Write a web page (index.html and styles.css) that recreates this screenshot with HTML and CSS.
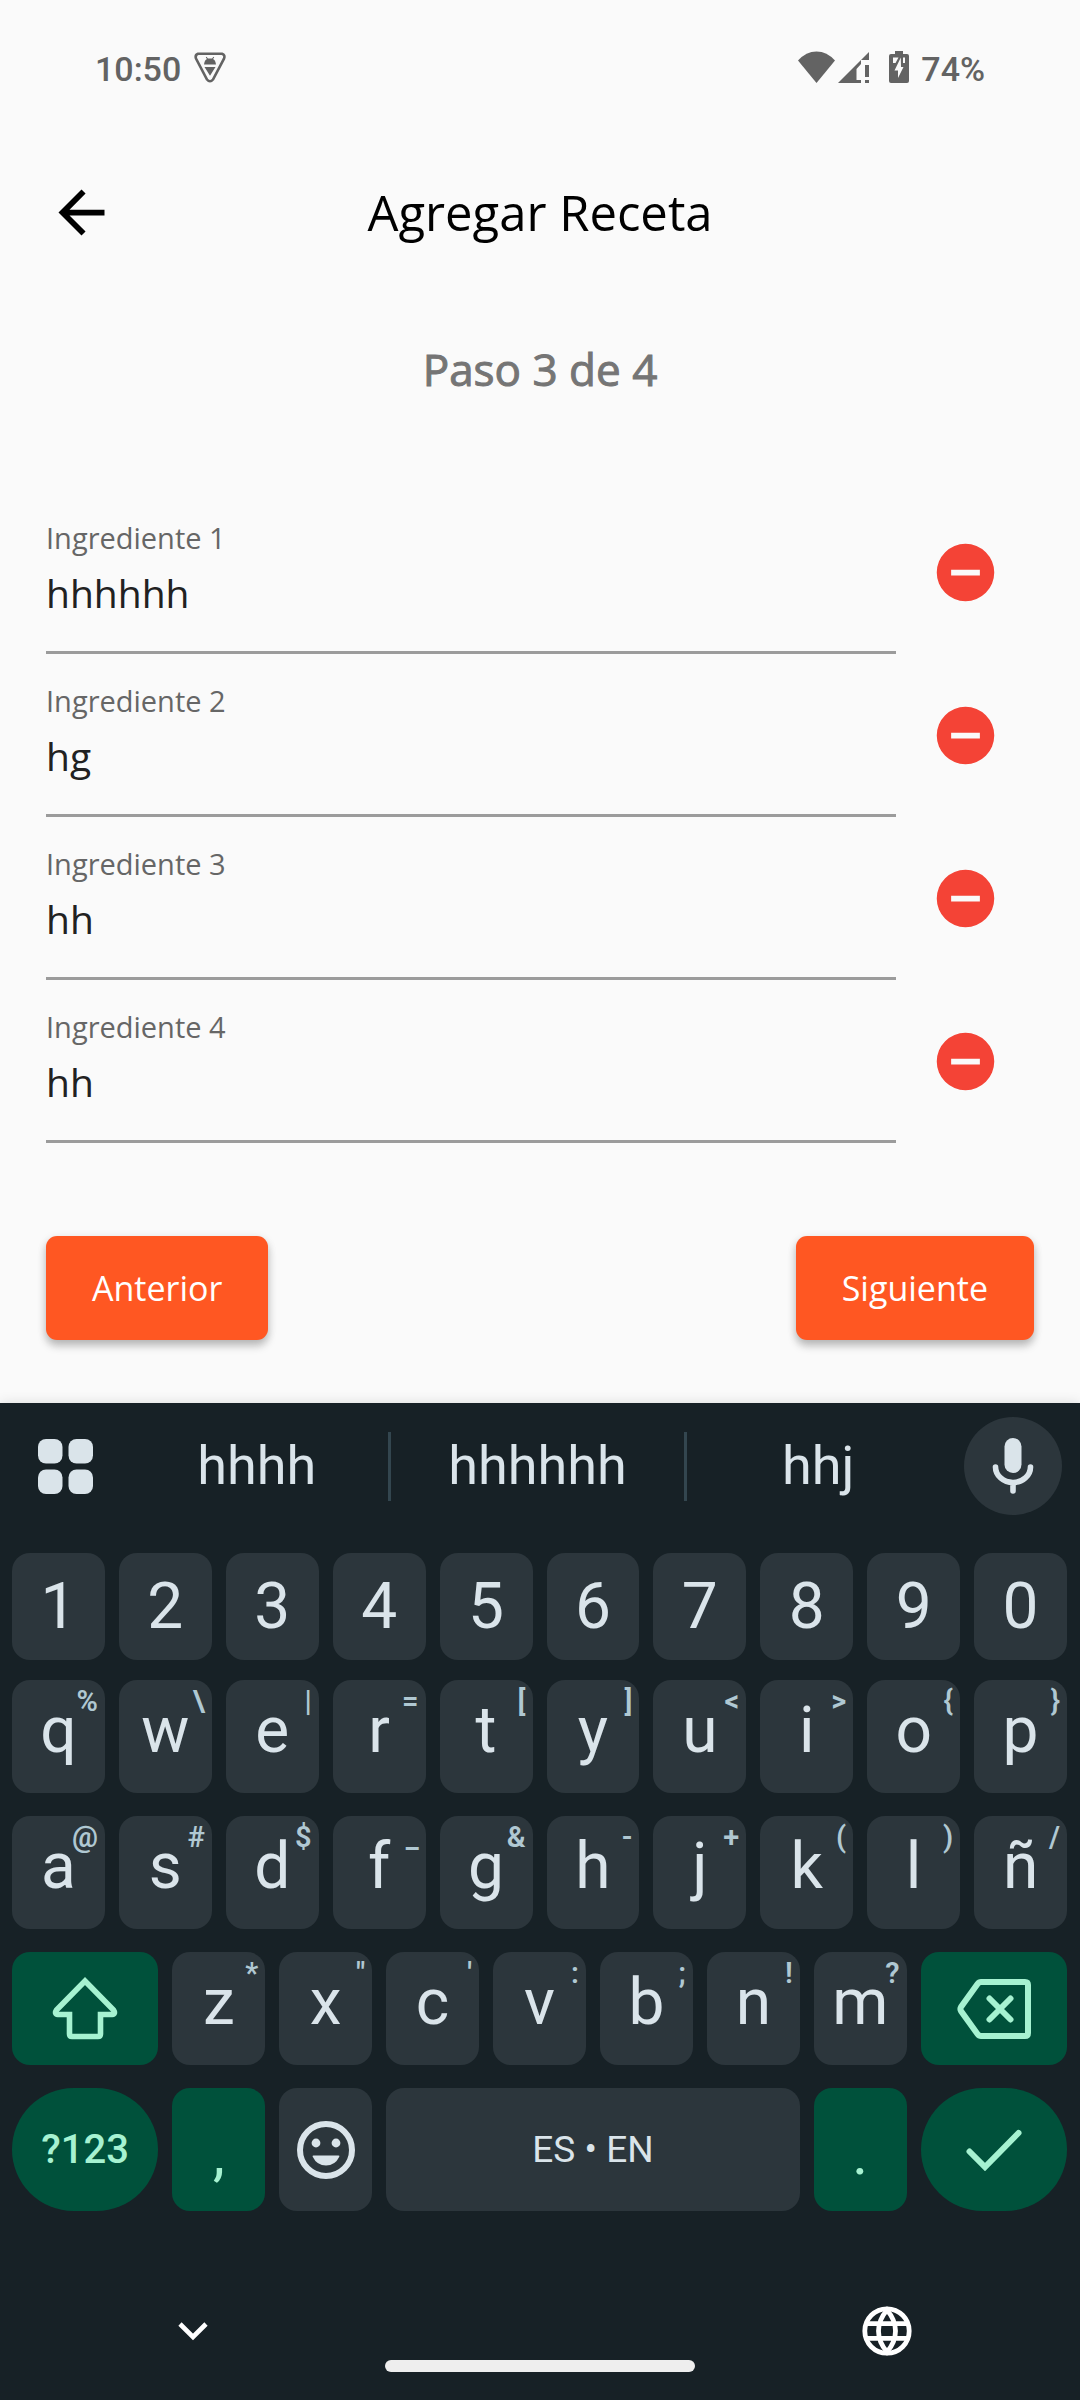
FILE: index.html
```html
<!DOCTYPE html>
<html lang="es">
<head>
<meta charset="utf-8">
<meta name="viewport" content="width=device-width, initial-scale=1">
<title>Agregar Receta</title>
<link rel="stylesheet" href="styles.css">
</head>
<body>
<div class="status">
  <div class="status-group">
    <span class="status-text">10:50</span>
    <svg class="shield" width="32" height="31" viewBox="0 0 32 31"><path d="M4 1.800h24q3.400 1.200 2 4.800L19 27.500q-3 3.500-6 0L2 6.600Q.8 3 4 1.800z" fill="none" stroke="currentColor" stroke-width="2.600"/><path d="M10 12.600q.6-4.800 3-5.600l-1.200-1.600.8-.6 1.300 1.800h4.200l1.300-1.800.8.6L19 7q2.400.8 3 5.600zM10.500 15h11L16 23.800z" fill="currentColor"/></svg>
  </div>
  <div class="status-group">
    <svg width="37" height="32" viewBox="0 0 37 32"><path d="M0 9.500Q8 .4 18.500.4T37 9.500L18.500 32z" fill="currentColor"/></svg>
    <svg class="signal" width="31" height="32" viewBox="0 0 31 32"><path d="M0 32 23 9v4l-4.500 5v11H23v3zM31 1v8h-8zM27 14h4v12h-4zM27 29h4v3h-4z" fill="currentColor"/></svg>
    <svg class="battery" width="20" height="32" viewBox="0 0 20 32"><path d="M6 0h8v3h4q2 0 2 2v25q0 2-2 2H2q-2 0-2-2V5q0-2 2-2h4z" fill="currentColor"/><path d="M4 6.500h5.500L6.500 12H4zM14 6.500h2V12h-2zM11.800 6.500 12 16h2.500L9 27v-7.500H5.500z" fill="#fafafa"/></svg>
    <span class="status-text">74%</span>
  </div>
</div>

<header class="appbar">
  <button class="back" type="button" aria-label="Volver"><svg width="69" height="69" viewBox="0 0 24 24"><path d="M20 11H7.830l5.590-5.590L12 4l-8 8 8 8 1.410-1.410L7.830 13H20z" fill="currentColor"/></svg></button>
  <h1 class="title">Agregar Receta</h1>
</header>

<main class="content">
  <h2 class="step">Paso 3 de 4</h2>
  <form class="form">
    <div class="row">
      <div class="field"><label for="ing1">Ingrediente 1</label><input id="ing1" type="text" value="hhhhhh"></div>
      <button class="remove" type="button" aria-label="Quitar ingrediente 1"><svg width="69" height="69" viewBox="0 0 24 24"><path d="M12 2a10 10 0 1 0 0 20 10 10 0 0 0 0-20zm5 11H7v-2h10z" fill="currentColor"/></svg></button>
    </div>
    <div class="row">
      <div class="field"><label for="ing2">Ingrediente 2</label><input id="ing2" type="text" value="hg"></div>
      <button class="remove" type="button" aria-label="Quitar ingrediente 2"><svg width="69" height="69" viewBox="0 0 24 24"><path d="M12 2a10 10 0 1 0 0 20 10 10 0 0 0 0-20zm5 11H7v-2h10z" fill="currentColor"/></svg></button>
    </div>
    <div class="row">
      <div class="field"><label for="ing3">Ingrediente 3</label><input id="ing3" type="text" value="hh"></div>
      <button class="remove" type="button" aria-label="Quitar ingrediente 3"><svg width="69" height="69" viewBox="0 0 24 24"><path d="M12 2a10 10 0 1 0 0 20 10 10 0 0 0 0-20zm5 11H7v-2h10z" fill="currentColor"/></svg></button>
    </div>
    <div class="row">
      <div class="field"><label for="ing4">Ingrediente 4</label><input id="ing4" type="text" value="hh"></div>
      <button class="remove" type="button" aria-label="Quitar ingrediente 4"><svg width="69" height="69" viewBox="0 0 24 24"><path d="M12 2a10 10 0 1 0 0 20 10 10 0 0 0 0-20zm5 11H7v-2h10z" fill="currentColor"/></svg></button>
    </div>
    <div class="actions">
      <button class="action" type="button">Anterior</button>
      <button class="action" type="button">Siguiente</button>
    </div>
  </form>
</main>

<section class="keyboard" aria-label="Teclado">
  <div class="suggestions">
    <button class="tools" type="button" aria-label="Herramientas"><svg width="55" height="55" viewBox="0 0 55 55" fill="currentColor"><rect width="24.500" height="24.500" rx="8"/><rect x="30.500" width="24.500" height="24.500" rx="8"/><rect y="30.500" width="24.500" height="24.500" rx="8"/><rect x="30.500" y="30.500" width="24.500" height="24.500" rx="8"/></svg></button>
    <div class="words">
      <button class="word" type="button">hhhh</button>
      <span class="divider"></span>
      <button class="word word-main" type="button">hhhhhh</button>
      <span class="divider"></span>
      <button class="word" type="button">hhj</button>
    </div>
    <button class="mic" type="button" aria-label="Dictado"><svg width="42" height="56" viewBox="0 0 42 56"><rect x="12.500" width="17" height="35" rx="8.500" fill="currentColor"/><path d="M3.500 29a17.500 15.500 0 0 0 35 0M21 45v8" fill="none" stroke="currentColor" stroke-width="5.600" stroke-linecap="round"/></svg></button>
  </div>

  <div class="keys">
    <div class="keyrow keyrow-digits">
      <button class="key" type="button">1</button><button class="key" type="button">2</button><button class="key" type="button">3</button><button class="key" type="button">4</button><button class="key" type="button">5</button><button class="key" type="button">6</button><button class="key" type="button">7</button><button class="key" type="button">8</button><button class="key" type="button">9</button><button class="key" type="button">0</button>
    </div>
    <div class="keyrow keyrow-letters">
      <button class="key" type="button">q<span class="hint">%</span></button><button class="key" type="button">w<span class="hint">\</span></button><button class="key" type="button">e<span class="hint">|</span></button><button class="key" type="button">r<span class="hint">=</span></button><button class="key" type="button">t<span class="hint">[</span></button><button class="key" type="button">y<span class="hint">]</span></button><button class="key" type="button">u<span class="hint">&lt;</span></button><button class="key" type="button">i<span class="hint">&gt;</span></button><button class="key" type="button">o<span class="hint">{</span></button><button class="key" type="button">p<span class="hint">}</span></button>
    </div>
    <div class="keyrow keyrow-letters">
      <button class="key" type="button">a<span class="hint">@</span></button><button class="key" type="button">s<span class="hint">#</span></button><button class="key" type="button">d<span class="hint">$</span></button><button class="key" type="button">f<span class="hint">_</span></button><button class="key" type="button">g<span class="hint">&amp;</span></button><button class="key" type="button">h<span class="hint">-</span></button><button class="key" type="button">j<span class="hint">+</span></button><button class="key" type="button">k<span class="hint">(</span></button><button class="key" type="button">l<span class="hint">)</span></button><button class="key" type="button">ñ<span class="hint">/</span></button>
    </div>
    <div class="keyrow keyrow-letters">
      <button class="key key-wide key-accent key-icon" type="button" aria-label="Mayúsculas"><svg width="66" height="64" viewBox="0 0 66 64"><path d="M33 4 61.500 33q2.500 4-1.500 4.500H48.500V57q0 2.500-2.500 2.500H20q-2.500 0-2.500-2.500V37.500H6q-4-.5-1.500-4.500z" fill="none" stroke="currentColor" stroke-width="5.600"/></svg></button><button class="key" type="button">z<span class="hint">*</span></button><button class="key" type="button">x<span class="hint">"</span></button><button class="key" type="button">c<span class="hint">'</span></button><button class="key" type="button">v<span class="hint">:</span></button><button class="key" type="button">b<span class="hint">;</span></button><button class="key" type="button">n<span class="hint">!</span></button><button class="key" type="button">m<span class="hint">?</span></button><button class="key key-wide key-accent key-icon" type="button" aria-label="Borrar"><svg width="74" height="60" viewBox="0 0 74 60"><path d="M24 3h44q3 0 3 3v48q0 3-3 3H24q-2 0-3.500-2L4 32q-1.200-2 0-4L20.500 5Q22 3 24 3zM32.500 19.500l21 21M53.500 19.500l-21 21" fill="none" stroke="currentColor" stroke-width="6" stroke-linecap="round"/></svg></button>
    </div>
    <div class="keyrow keyrow-bottom">
      <button class="key key-wide key-accent key-round key-symbols" type="button">?123</button>
      <button class="key key-accent key-mark" type="button">,</button>
      <button class="key" type="button" aria-label="Emojis"><svg width="58" height="58" viewBox="0 0 58 58"><circle cx="29" cy="29" r="26" fill="none" stroke="currentColor" stroke-width="6"/><circle cx="19" cy="22" r="4.400" fill="currentColor"/><circle cx="39" cy="22" r="4.400" fill="currentColor"/><path d="M16.500 34.500h25q1.200 0 .8 1.200Q38 44.500 29 44.500T15.700 35.700q-.4-1.200.8-1.200z" fill="currentColor"/></svg></button>
      <button class="key key-space" type="button">ES • EN</button>
      <button class="key key-accent key-mark" type="button">.</button>
      <button class="key key-wide key-accent key-round" type="button" aria-label="Listo"><svg width="56" height="42" viewBox="0 0 56 42"><path d="M3.500 22.500 19 38 52.500 4" fill="none" stroke="currentColor" stroke-width="6" stroke-linecap="round"/></svg></button>
    </div>
  </div>

  <div class="nav">
    <button class="navbtn" type="button" aria-label="Ocultar teclado"><svg width="30" height="20" viewBox="0 0 30 20"><path d="M2 3l13 13L28 3" fill="none" stroke="currentColor" stroke-width="4.600"/></svg></button>
    <button class="navbtn" type="button" aria-label="Cambiar idioma"><svg width="50" height="50" viewBox="0 0 50 50" fill="none" stroke="currentColor" stroke-width="4.800"><circle cx="25" cy="25" r="22.200"/><path d="M25 4Q16.500 14 16.500 25T25 46Q33.500 36 33.500 25T25 4zM5 17.700h40M5 32.300h40"/></svg></button>
  </div>
  <div class="homebar"></div>
</section>
</body>
</html>
```
FILE: styles.css
```css
* {
  box-sizing: border-box;
}

body {
  margin: 0;
  min-height: 100vh;
  display: flex;
  flex-direction: column;
  background: #fafafa;
  color: #000;
  font-family: "Open Sans", "Noto Sans", sans-serif;
}

button {
  margin: 0;
  padding: 0;
  border: 0;
  background: none;
  color: inherit;
  font: inherit;
}

svg {
  display: block;
}

/* Status bar */
.status {
  display: flex;
  justify-content: space-between;
  height: 139px;
  padding: 49px 95px 0;
  color: #636363;
  font: 500 34px/40px Roboto, sans-serif;
}

.status-group {
  display: flex;
  height: 36px;
  align-items: center;
}

.status-text {
  padding-top: 3px;
}

.shield {
  margin-left: 13px;
}

.signal {
  margin-left: 3px;
}

.battery {
  margin: 0 12px 0 20px;
}

/* App bar */
.appbar {
  display: grid;
  grid-template-columns: 146px 1fr 146px;
  align-items: center;
  height: 146px;
}

.back {
  display: flex;
  align-items: center;
  justify-content: center;
  height: 146px;
  padding-left: 16px;
}

.title {
  margin: 0;
  text-align: center;
  font-size: 49px;
  font-weight: 400;
  line-height: 66px;
}

/* Form */
.content {
  flex: 1;
  padding: 52px 46px 0;
}

.step {
  margin: 0 0 90px;
  text-align: center;
  color: #757575;
  font-size: 44px;
  font-weight: 400;
  line-height: 64px;
  -webkit-text-stroke: 1px #757575;
}

.row {
  display: grid;
  grid-template-columns: 1fr 138px;
}

.field {
  display: flex;
  flex-direction: column;
  padding: 23px 0 27px;
  border-bottom: 3px solid #9b9b9b;
}

.field label {
  color: #666;
  font-size: 29px;
  line-height: 48px;
}

.field input {
  width: 100%;
  height: 62px;
  padding: 0;
  border: 0;
  outline: 0;
  background: none;
  color: #212121;
  font: 400 39px/62px "Open Sans", "Noto Sans", sans-serif;
}

.remove {
  display: flex;
  align-items: center;
  justify-content: center;
  color: #f44336;
}

.actions {
  display: flex;
  justify-content: space-between;
  padding: 93px 0 63px;
}

.action {
  height: 104px;
  padding: 0 46px;
  border-radius: 11px;
  background: #ff5722;
  color: #fff;
  font-size: 34px;
  line-height: 48px;
  box-shadow: 0 6px 8px rgba(0, 0, 0, 0.22), 0 2px 10px rgba(0, 0, 0, 0.1);
}

/* Keyboard */
.keyboard {
  background: #172126;
  color: #dae4ea;
  font-family: Roboto, sans-serif;
  box-shadow: 0 0 12px rgba(0, 20, 0, 0.12);
}

.suggestions {
  display: flex;
  align-items: center;
  height: 126px;
  padding: 0 18px 0 38px;
}

.tools {
  width: 87px;
}

.words {
  flex: 1;
  display: flex;
  align-items: center;
}

.word {
  flex: 265 1 0;
  font-size: 54px;
  line-height: 70px;
}

.word-main {
  flex-grow: 294;
}

.divider {
  width: 3px;
  height: 69px;
  background: #33464f;
}

.mic {
  display: flex;
  align-items: center;
  justify-content: center;
  width: 98px;
  height: 98px;
  margin-left: 14px;
  border-radius: 50%;
  background: #2c363c;
}

.keys {
  display: grid;
  gap: 23px;
  padding: 24px 13px 0 12px;
}

.keyrow {
  display: grid;
  grid-template-columns: repeat(20, 1fr);
  column-gap: 14px;
}

.keyrow-digits {
  height: 107px;
  margin-bottom: -3px;
}

.keyrow-letters {
  height: 113px;
}

.keyrow-bottom {
  height: 123px;
}

.key {
  position: relative;
  grid-column: span 2;
  display: flex;
  align-items: center;
  justify-content: center;
  min-width: 0;
  border-radius: 18px;
  background: #2c363c;
  font-size: 64px;
  line-height: 72px;
}

.keyrow-letters .key {
  padding-bottom: 12px;
}

.keyrow-letters .key-icon {
  padding-bottom: 0;
}

.key-wide {
  grid-column: span 3;
}

.key-accent {
  background: #00513b;
  color: #a6f2d1;
}

.key-round {
  border-radius: 62px;
}

.key-mark {
  padding-top: 8px;
  font-size: 60px;
}

.key-symbols {
  font-size: 40px;
  font-weight: 500;
}

.key-space {
  grid-column: span 8;
  font-size: 37px;
}

.hint {
  position: absolute;
  top: 5px;
  right: 7px;
  color: #b0c8d2;
  font-size: 29px;
  font-weight: 600;
  line-height: 32px;
}

/* System navigation */
.nav {
  display: flex;
  justify-content: space-between;
  padding: 95px 157px 0;
}

.navbtn {
  display: flex;
  align-items: center;
  justify-content: center;
  width: 72px;
  height: 50px;
  color: #fff;
}

.homebar {
  width: 310px;
  height: 12px;
  margin: 4px auto 0;
  border-radius: 6px;
  background: #eee;
}

.keyboard::after {
  content: "";
  display: block;
  height: 28px;
}
```
